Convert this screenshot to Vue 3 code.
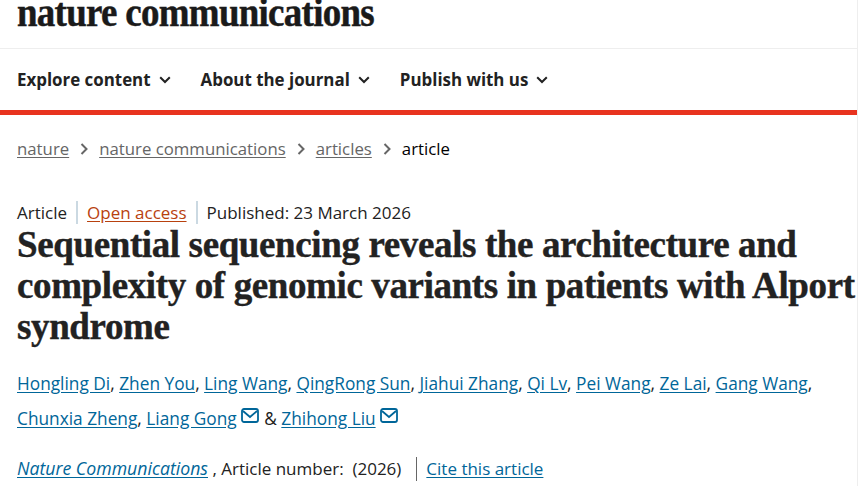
<script setup>
const crumbs = ['nature', 'nature communications', 'articles']
const navItems = ['Explore content', 'About the journal', 'Publish with us']
const authorsFirst = ['Hongling Di', 'Zhen You', 'Ling Wang', 'QingRong Sun', 'Jiahui Zhang', 'Qi Lv', 'Pei Wang', 'Ze Lai', 'Gang Wang']
</script>

<template>
  <div class="page">
    <header class="logo-bar">
      <span class="logo">nature communications</span>
    </header>
    <nav class="nav">
      <a v-for="item in navItems" :key="item" class="nav-item">
        {{ item }}
        <svg class="chevron" width="12" height="8" viewBox="0 0 12 8"><path d="M1.2 1.2 6 6l4.8-4.8" fill="none" stroke="#222" stroke-width="2"/></svg>
      </a>
    </nav>
    <div class="crumbs">
      <template v-for="c in crumbs" :key="c">
        <a class="crumb">{{ c }}</a>
        <svg class="crumb-sep" width="8" height="12" viewBox="0 0 8 12"><path d="M1.5 1 6.5 6l-5 5" fill="none" stroke="#666" stroke-width="2"/></svg>
      </template>
      <span class="crumb-now">article</span>
    </div>
    <main class="article">
      <ul class="meta">
        <li>Article</li>
        <li><a class="open">Open access</a></li>
        <li>Published: 23 March 2026</li>
      </ul>
      <h1 class="title">Sequential sequencing reveals the architecture and complexity of genomic variants in patients with Alport syndrome</h1>
      <div class="authors">
        <div class="author-line">
          <template v-for="a in authorsFirst" :key="a"><a class="link">{{ a }}</a>, </template>
        </div>
        <div class="author-line">
          <a class="link">Chunxia Zheng</a>, <a class="link">Liang Gong</a>
          <svg class="mail" width="18" height="15" viewBox="0 0 18 15"><rect x="1" y="1" width="16" height="13" rx="2" fill="none" stroke="#069" stroke-width="1.8"/><path d="M2 3l7 6 7-6" fill="none" stroke="#069" stroke-width="1.8"/></svg>
          &amp; <a class="link">Zhihong Liu</a>
          <svg class="mail" width="18" height="15" viewBox="0 0 18 15"><rect x="1" y="1" width="16" height="13" rx="2" fill="none" stroke="#069" stroke-width="1.8"/><path d="M2 3l7 6 7-6" fill="none" stroke="#069" stroke-width="1.8"/></svg>
        </div>
      </div>
      <div class="journal">
        <span><a class="link journal-name">Nature Communications</a> , Article number: &nbsp;(2026)</span>
        <a class="link cite">Cite this article</a>
      </div>
    </main>
  </div>
</template>

<style>
html, body { margin: 0; background: #fff; overflow: hidden; }
</style>

<style scoped>
.page {
  height: 486px;
  overflow: hidden;
  box-sizing: border-box;
  border-right: 1px solid #eee;
  font-family: "Open Sans", "Noto Sans", sans-serif;
  font-size: 17px;
  color: #222;
}
.logo-bar {
  height: 48px;
  border-bottom: 1px solid #eee;
  padding-left: 17px;
  overflow: hidden;
}
.logo {
  display: block;
  width: max-content;
  margin-top: -12px;
  font-family: "Liberation Serif", serif;
  font-weight: 700;
  font-size: 41px;
  line-height: 48px;
  letter-spacing: -0.76px;
  color: #1a1a1a;
  -webkit-text-stroke: 0.5px #1a1a1a;
  transform: scaleX(0.9);
  transform-origin: left;
}
.nav {
  display: flex;
  gap: 30px;
  height: 61px;
  align-items: center;
  padding-left: 17px;
  border-bottom: 5px solid #e8331f;
  font-weight: 700;
  font-size: 16.9px;
}
.nav-item {
  display: flex;
  align-items: center;
  gap: 8px;
}
.crumbs {
  display: flex;
  align-items: center;
  gap: 11px;
  padding: 22px 0 0 17px;
  line-height: 24px;
  font-size: 16.8px;
}
.crumb {
  color: #666;
  text-decoration: underline;
  text-underline-offset: 2px;
}
.crumb-now { color: #000; }
.article { padding: 0 0 0 17px; }
.meta {
  display: flex;
  list-style: none;
  margin: 40px 0 0;
  padding: 0;
  line-height: 23px;
}
.meta li + li {
  margin-left: 9px;
  padding-left: 9px;
  border-left: 2px solid #cbd9e2;
}
.open {
  color: #b8410e;
  text-decoration: underline;
  text-underline-offset: 2px;
}
.title {
  margin: 0 -12px 0 0;
  font-family: "Liberation Serif", serif;
  font-weight: 700;
  font-size: 37px;
  line-height: 41px;
  color: #222;
  letter-spacing: -0.38px;
  -webkit-text-stroke: 0.4px #222;
}
.authors { margin-top: 19px; }
.author-line {
  line-height: 35px;
  white-space: nowrap;
  font-size: 17.3px;
}
.link {
  color: #069;
  text-decoration: underline;
  text-underline-offset: 2px;
}
.mail {
  margin: 0 1px 0 4px;
  vertical-align: 2px;
}
.journal {
  display: flex;
  align-items: center;
  margin-top: 20px;
  line-height: 24px;
}
.journal-name {
  font-style: italic;
  font-size: 17.7px;
}
.cite {
  margin-left: 15px;
  padding-left: 9px;
  border-left: 1px solid #666;
}
</style>
